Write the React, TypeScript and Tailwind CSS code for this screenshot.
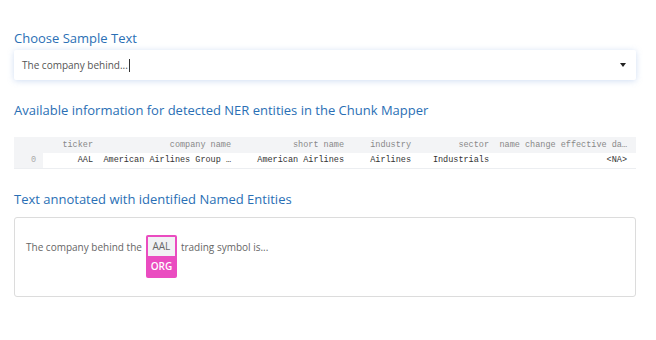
import React from "react";

const columns = [
  { key: "ticker", label: "ticker", width: "w-[55px]" },
  { key: "company", label: "company name", width: "w-[138px]" },
  { key: "short", label: "short name", width: "w-[113px]" },
  { key: "industry", label: "industry", width: "w-[67px]" },
  { key: "sector", label: "sector", width: "w-[78px]" },
  { key: "change", label: "name change effective da…", width: "w-[138px]" },
];

const row: Record<string, string> = {
  ticker: "AAL",
  company: "American Airlines Group …",
  short: "American Airlines",
  industry: "Airlines",
  sector: "Industrials",
  change: "<NA>",
};

const Heading = ({ children }: { children: React.ReactNode }) => (
  <h2 className="text-[13px] leading-[18px] text-[#2a6fb5] font-['Open_Sans',sans-serif] font-medium">
    {children}
  </h2>
);

export default function App() {
  return (
    <div className="w-[656px] h-[340px] bg-white pl-[14px] pr-[20px] pt-[29px] font-['Open_Sans',sans-serif]">
      <Heading>Choose Sample Text</Heading>
      <div className="mt-[3px] h-[30px] flex items-center justify-between pl-[8px] pr-[10px] bg-white rounded-[2px] shadow-[0_1px_6px_rgba(120,160,220,0.35)]">
        <span className="text-[10px] text-[#555] flex items-center">
          The company behind...
          <span className="ml-[1px] inline-block w-px h-[13px] bg-[#333]" />
        </span>
        <span className="w-0 h-0 border-l-[3px] border-r-[3px] border-t-[4px] border-l-transparent border-r-transparent border-t-[#222]" />
      </div>

      <div className="mt-[21px]">
        <Heading>Available information for detected NER entities in the Chunk Mapper</Heading>
      </div>

      <div className="mt-[18px] w-[622px] font-['Liberation_Mono',monospace] text-[8.5px]">
        <div className="flex h-[16px] items-center bg-[#f3f4f6] text-[#888]">
          <div className="w-[29px]" />
          {columns.map((c) => (
            <div key={c.key} className={`${c.width} text-right pr-[5px] whitespace-nowrap`}>
              {c.label}
            </div>
          ))}
        </div>
        <div className="flex h-[16px] items-center border-b border-[#eceef1] text-[#333]">
          <div className="w-[29px] h-full bg-[#f3f4f6] text-[#aaa] flex items-center pl-[17px]">0</div>
          {columns.map((c) => (
            <div key={c.key} className={`${c.width} text-right pr-[5px] whitespace-nowrap`}>
              {row[c.key]}
            </div>
          ))}
        </div>
      </div>

      <div className="mt-[21px]">
        <Heading>Text annotated with identified Named Entities</Heading>
      </div>

      <div className="mt-[9px] h-[80px] border border-[#dcdcdc] rounded-[3px] px-[11px] pt-[17px]">
        <div className="flex items-start text-[10px] text-[#666]">
          <span className="mt-[5px]">The company behind the</span>
          <span className="mx-[4px] flex flex-col items-center bg-[#ea4cc0] rounded-[2px] p-[2px] w-[31px]">
            <span className="w-full h-[19px] bg-[#f1f2f4] text-[#666] text-center leading-[19px]">AAL</span>
            <span className="h-[20px] leading-[20px] text-white font-semibold text-[10px]">ORG</span>
          </span>
          <span className="mt-[5px]">trading symbol is...</span>
        </div>
      </div>
    </div>
  );
}
